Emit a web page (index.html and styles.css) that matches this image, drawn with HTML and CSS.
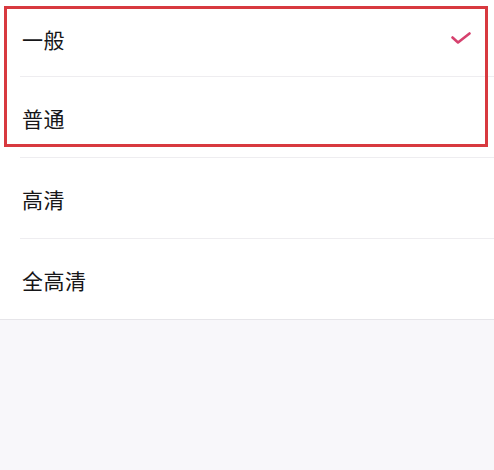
FILE: index.html
```html
<!DOCTYPE html>
<html lang="zh-CN">
<head>
<meta charset="utf-8">
<title>清晰度</title>
<link rel="stylesheet" href="styles.css">
</head>
<body>
<div class="page">
  <ul class="list">
    <li class="item first">
      <span class="label">一般</span>
      <svg class="check" width="20" height="12" viewBox="0 0 20 12"><path d="M1.5 5.5 L7 10.5 L18.5 1.5" fill="none" stroke="#d6416e" stroke-width="2.6" stroke-linecap="round" stroke-linejoin="round"/></svg>
    </li>
    <li class="item"><span class="label">普通</span></li>
    <li class="item"><span class="label">高清</span></li>
    <li class="item last"><span class="label">全高清</span></li>
  </ul>
  <div class="highlight"></div>
</div>
</body>
</html>
```

FILE: styles.css
```css
html, body {
  margin: 0;
  padding: 0;
}
body {
  background: #f8f7fa;
  font-family: "Noto Sans CJK SC", "Noto Sans", sans-serif;
  width: 494px;
  height: 470px;
  overflow: hidden;
}
.page {
  position: relative;
}
.list {
  list-style: none;
  margin: 0;
  padding: 0;
  background: #ffffff;
}
.item {
  height: 80px;
  display: flex;
  align-items: center;
  justify-content: space-between;
  padding: 0 23px 0 22px;
  position: relative;
  box-sizing: content-box;
}
.item::after {
  content: "";
  position: absolute;
  left: 20px;
  right: 0;
  bottom: -1px;
  height: 1px;
  background: #eeedf0;
}
.item + .item {
  margin-top: 1px;
}
.item.first {
  height: 76px;
}
.item.last::after {
  left: 0;
  background: #e6e5e9;
}
.item.last {
  margin-bottom: 1px;
}
.label {
  font-size: 21px;
  color: #161618;
  letter-spacing: 0.5px;
  line-height: 1;
  margin-top: 2px;
}
.check {
  display: block;
  margin-top: -1px;
}
.highlight {
  position: absolute;
  left: 4px;
  top: 6px;
  width: 478px;
  height: 135px;
  border: 3px solid #d8393f;
  pointer-events: none;
}
```
